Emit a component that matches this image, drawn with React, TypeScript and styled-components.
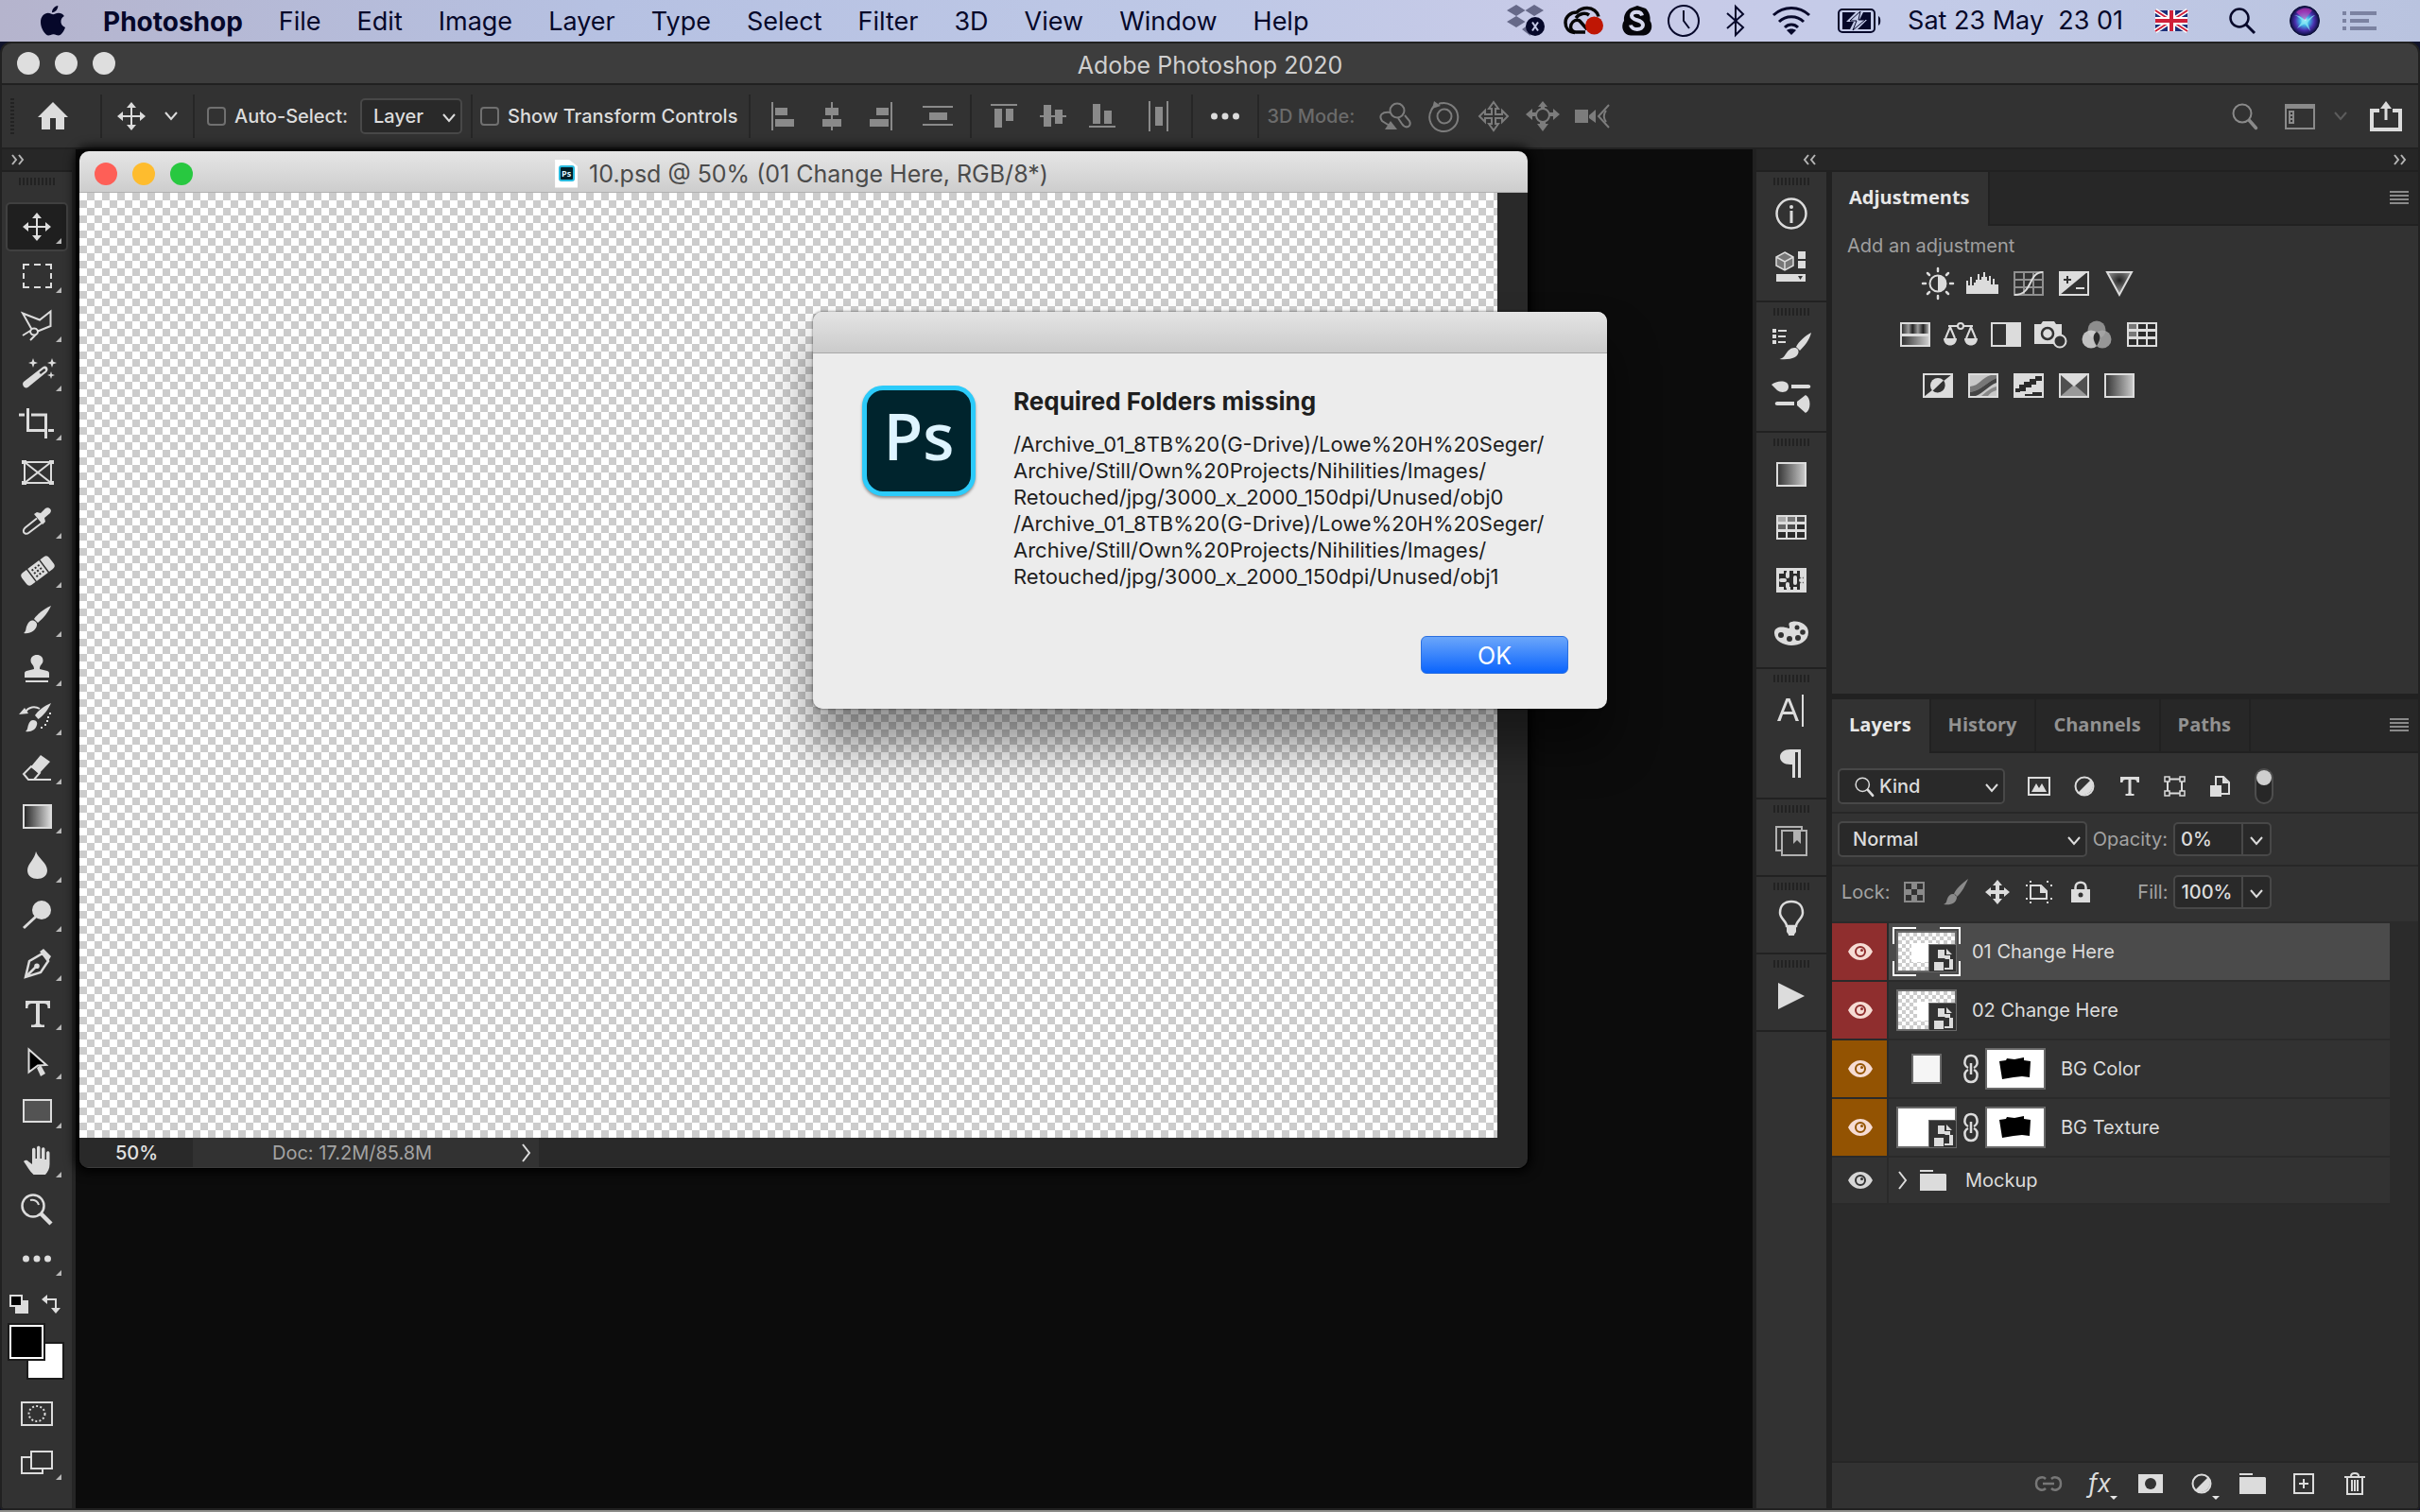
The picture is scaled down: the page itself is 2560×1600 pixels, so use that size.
import React from 'react';
import styled, { createGlobalStyle, css } from 'styled-components';

const ui = '"Inter", "Liberation Sans", sans-serif';
const tabFont = '"Open Sans", "Noto Sans", sans-serif';
const c = {
  edge: '#212121',
  panel: '#323232',
  well: '#272727',
  field: '#292929',
  outline: '#484848',
  text: '#dcdcdc',
  muted: '#a3a3a3',
  dim: '#8a8a8a',
};

const Global = createGlobalStyle`
  *, *::before, *::after { box-sizing: border-box; }
  body { margin: 0; background: #0c0c0c; font-family: ${ui}; -webkit-font-smoothing: antialiased; }
  button, input, select { font: inherit; color: inherit; }
`;

/* ---------- icons ---------- */

const Svg = styled.svg`
  display: block;
  flex: none;
  overflow: visible;
`;

type Art = [number, number, React.ReactNode];
const L = { fill: 'none', stroke: 'currentColor', strokeWidth: 2 } as const;
const moveArrow = 'M20 1l5 6h-4v8h8v-4l6 5-6 5v-4h-8v8h4l-5 6-5-6h4v-8h-8v4l-6-5 6-5v4h8V7h-4z';
const brushArt = (
  <>
    <path d="M35 1c-7 3-15 9-18 14l4 4c5-4 11-11 14-18z" />
    <path d="M15 16.500c3 0 5.500 2.500 5 5-1 6-7 9.500-14 8.500 3-2 2-5 3.500-8 1-3 3-5.500 5.500-5.500z" />
  </>
);

const art: Record<string, Art> = {
  /* tools */
  move: [40, 32, <path d={moveArrow} />],
  marquee: [40, 32, <path {...L} d="M6 9V4h6M17 4h7M29 4h6v5M35 13v6M35 23v5h-6M24 28h-7M12 28H6v-5M6 19v-6" />],
  lasso: [40, 32, <path {...L} d="M14 19.500L5 3.500l18 7L34.500 1.500V17L21 22.500M17 19.500a4 3.500 0 1 0 .1 0zM13 22l-8 5M19 26l-6 6" />],
  wand: [40, 32, <><path d="M6 24L26 8.500c2-1.500 4-1 5 .5s.6 3.500-1 5L11 29.500c-2 1.500-4 1-5-.5s-1.500-3.500 0-5z" /><path d="M22.500 14l4.500-3.500c1.500-1 3 .7 1.600 2L24 16z" fill="#323232" /><path d="M16-1l1.300 3.700L21 4l-3.700 1.300L16 9l-1.300-3.700L11 4l3.700-1.300zM36-1l1.300 3.700L41 4l-3.700 1.300L36 9l-1.300-3.700L31 4l3.700-1.300zM35 13l1 3 3 1-3 1-1 3-1-3-3-1 3-1z" /></>],
  crop: [40, 32, <path {...L} strokeWidth="3" d="M1 7h6M10.500 0v23.500H29M14 7h15.500v25M32 23.500h6" />],
  frame: [40, 32, <><path {...L} d="M7 5h28v22H7zM7 5l28 22M35 5L7 27" /><path d="M4 3h5v4H4zM33 3h5v4h-5zM4 25h5v4H4zM33 25h5v4h-5z" /></>],
  dropper: [40, 32, <><path {...L} d="M20 12.500L7.500 22.500c-2 2-2.500 5 0 6 1.500.6 3 0 4-.8L25 17.500" /><path d="M17 8l3-2 4 1 5-5c3-2 8 1 5 5l-6 5 1 4-3 3z" /></>],
  heal: [40, 32, <g transform="rotate(-37 21 16)"><path d="M3 12a4 4 0 0 1 4-4h5v16H7a4 4 0 0 1-4-4zM30 8h5a4 4 0 0 1 4 4v8a4 4 0 0 1-4 4h-5zM13.500 8h15v16h-15z" /><path d="M16 11h2v2h-2zM20 11h2v2h-2zM24 11h2v2h-2zM16 15h2v2h-2zM20 15h2v2h-2zM24 15h2v2h-2zM16 19h2v2h-2zM20 19h2v2h-2zM24 19h2v2h-2z" fill="#323232" /></g>],
  brush: [40, 32, brushArt],
  stamp: [40, 32, <path d="M20 1c4 0 6.500 2.500 6.500 6 0 4-3.500 4-3.500 9l8 2c1.500.5 2 1 2 3v4H7v-4c0-2 .5-2.500 2-3l8-2c0-5-3.500-5-3.500-9 0-3.500 2.500-6 6.500-6zM8 28h24v2H8z" />],
  history: [40, 32, <><path d="M35 0c-7 3-14 8-17 13l3.500 4C27 13 32 7 35 0zM16 18c3 0 5 2 4 5-1 5-6 8-12 7 2.500-2 2-4 3-7s2.500-5 5-5zM1 12l6-7 4 6z" /><path {...L} d="M8 9c3-5 10-6 15-3" /><path d="M31 14h2v2h-2zM30 18h2v2h-2zM28 22h2v2h-2zM24 25h2v2h-2zM33 10h2v2h-2z" /></>],
  eraser: [40, 32, <><path d="M14 15L24 3l10 7-12 13z" /><path {...L} d="M14 15l-8 8 5 6h6l6-7zM11 29h24" /></>],
  gradient: [40, 32, <><defs><linearGradient id="gTool"><stop offset="0" stopColor="#222" /><stop offset="1" stopColor="#ddd" /></linearGradient></defs><rect x="6" y="4" width="29" height="24" fill="url(#gTool)" stroke="currentColor" strokeWidth="2" /></>],
  blur: [40, 32, <path d="M19 1c2 7 12 12 12 20 0 6-5 9-10.500 9S10 27 10 21c0-7 8-12 9-20z" />],
  dodge: [40, 32, <><ellipse cx="25" cy="11" rx="10" ry="10" /><path stroke="currentColor" strokeWidth="3" d="M6 30l14-13" /></>],
  pen: [40, 32, <><path {...L} strokeWidth="2.500" d="M8 30l4-17 14-8 6 8-8 12zM8 30l11-11" /><path d="M23 3l4-3 8 8-3 5zM20 15.500a2.800 2.800 0 1 1 0 5.600 2.800 2.800 0 0 1 0-5.600z" /></>],
  type: [40, 32, <path d="M8 3h26v8h-2.500c0-4-1-5-5-5H23v20c0 2 1 2.500 5 2.500V31H14v-2.500c4 0 5-.5 5-2.500V6h-3.500c-4 0-5 1-5 5H8z" />],
  select: [40, 32, <><path d="M24 19l5 9-5 3-4-9z" /><path d="M11.500 2.500L30 19l-9 .5-9.500 7z" fill="#000" stroke="currentColor" strokeWidth="2" /></>],
  rect: [40, 32, <rect x="6" y="4" width="29" height="23" fill="#535353" stroke="currentColor" strokeWidth="2" />],
  hand: [40, 32, <path d="M16.500 31C12 27 9 21 6 17c2-2 4-1 5 0l4 3V4.500c0-2.500 3.500-2.500 3.500 0V14h1.500V2.500c0-2.500 3.500-2.500 3.500 0V14H25V4c0-2.500 3.500-2.500 3.500 0v11H30V8c0-2.500 3.500-2.500 3.500 0v12c0 5-2 8-4.500 11z" />],
  zoom: [40, 32, <><ellipse {...L} cx="16" cy="12" rx="11.500" ry="11.500" strokeWidth="2.500" /><path {...L} d="M13 6c4-1 8 1 9 5" /><path stroke="currentColor" strokeWidth="4.500" d="M24 20l11 11" /></>],
  dots: [40, 32, <path d="M8.500 12.500a3.500 3.500 0 1 1 0 7 3.500 3.500 0 0 1 0-7zM20 12.500a3.500 3.500 0 1 1 0 7 3.500 3.500 0 0 1 0-7zM31.500 12.500a3.500 3.500 0 1 1 0 7 3.500 3.500 0 0 1 0-7z" />],
  defaults: [20, 20, <><path d="M6 6h14v14H6z" /><rect x="1" y="1" width="12" height="11" fill="#000" stroke="currentColor" strokeWidth="2" /></>],
  swap: [20, 20, <><path {...L} d="M5 5h10v10" /><path d="M0 5l6-5v10zM10 14h10l-5 6z" /></>],
  quickMask: [34, 26, <><rect {...L} x="1" y="1" width="32" height="24" /><ellipse {...L} cx="17" cy="13" rx="8.500" ry="8" strokeDasharray="2 2.200" /></>],
  screens: [34, 26, <><path {...L} d="M11 7H1v17h22v-5" /><rect {...L} x="11" y="1" width="22" height="18" /></>],

  /* option bar */
  home: [32, 30, <path d="M16 0l16 16h-4v13H19V17h-6v12H4V16H0z" />],
  chevron: [14, 10, <path {...L} d="M1 1l6 7 6-7" />],
  alignL: [24, 30, <path d="M0 0h2v30H0zM4 6h13v8H4zM4 18h20v8H4z" />],
  alignC: [24, 30, <path d="M11 0h2v6h6v8h-6v4h9v8h-9v4h-2v-4H2v-8h9v-4H5V6h6z" />],
  alignR: [24, 30, <path d="M22 0h2v30h-2zM7 6h13v8H7zM0 18h20v8H0z" />],
  spreadV: [32, 22, <path d="M0 0h32v2H0zM7 7h19v8H7zM0 19h32v2H0z" />],
  alignT: [28, 26, <path d="M0 0h28v2H0zM4 5h8v20H4zM16 5h8v13h-8z" />],
  alignM: [28, 24, <path d="M0 11h4V0h8v11h4V5h8v6h4v2h-4v7h-8v-7h-4v10H4V13H0z" />],
  alignB: [28, 26, <path d="M0 23h28v2H0zM4 0h8v21H4zM16 7h8v14h-8z" />],
  spreadH: [22, 32, <path d="M0 0h2v32H0zM7 6h8v20H7zM19 0h2v32h-2z" />],
  orbit: [34, 30, <><circle {...L} cx="19" cy="9" r="7.500" /><path {...L} d="M11.500 11C3 10-1 14 3 20l8 5M20 17l4 6c4 6 11 3 8-3l-5-6" /><path d="M6 29l6-9 7 9z" /></>],
  roll: [34, 32, <><circle {...L} cx="17" cy="16" r="7.500" /><path {...L} d="M11 3A15 15 0 1 1 3 10M3 10c1-3 3-5 5-6" /><path d="M4 8l2-8 7 5z" /></>],
  pan3d: [34, 32, <path {...L} d="M17 1l5 7h-3v6h7v-4l6 6-6 6v-4h-7v6h3l-5 7-5-7h3v-6H8v4l-6-6 6-6v4h7V8h-3z" />],
  slide3d: [36, 32, <><circle {...L} cx="18" cy="15" r="7" /><path d="M18 0l5 6h-3v3h-4V6h-3zM18 32l6-8h-3v-3h-6v3h-3zM0 14l7-6v4h4v4H7v4zM36 14l-7-6v4h-4v4h4v4z" /></>],
  camera3d: [36, 26, <><path d="M0 6h14v14H0zM15 12l7-6v14l-7-5z" /><path {...L} d="M36 1L25 13l11 12M33 7c-3 4-3 8 0 12" /></>],
  search: [28, 28, <><circle {...L} cx="11" cy="11" r="9.500" /><path stroke="currentColor" strokeWidth="3.500" strokeLinecap="round" d="M18.500 18.500l7 8" /></>],
  workspace: [32, 27, <><path {...L} d="M1 1h30v25H1z" /><path d="M0 0h32v5H0z" /><path {...L} d="M5 8h4v12H5zM5 12h4M5 16h4" /></>],
  share: [34, 32, <><path d="M0 8h10v4H4v16h26V12h-6V8h10v24H0z" /><path d="M17 0l6 8h-4.500v12h-3V8H11z" /></>],

  /* menu bar */
  apple: [26, 32, <><path d="M18.300 0c.3 3.500-2.900 7.300-6.300 7.200C11.700 3.800 15 .2 18.300 0z" /><path d="M13.200 9.300c1.500 0 3-1.600 5.800-1.600 2.300 0 4.500 1.200 5.900 3.200-5.100 3-4.300 10 1.100 12.100-1 3.300-4.200 8.600-7.100 8.600-2 0-2.800-1.300-5.300-1.300s-3.400 1.300-5.300 1.300C4.900 31.600 0 24.200 0 17.600 0 11.200 4 7.800 7.800 7.800c2.400 0 4 1.500 5.400 1.500z" /></>],
  dropbox: [40, 34, <><g opacity=".5"><path d="M10 0l9.500 6-9.500 6-10-6zM29 0l10 6-10 6-9.500-6zM10 12l9.500 6-9.500 6-10-6zM16 26l7-5 2 12z" /></g><circle cx="30" cy="23" r="10" /><path d="M27 18.500l6 9M33 18.500l-6 9" stroke="#c6cae6" strokeWidth="2" /></>],
  cc: [42, 30, <g color="#050505"><path {...L} strokeWidth="3.500" d="M12 27.500C5 27 2 22 2 17 2 10 8 6 14 6 17 3 21 1.500 25 1.500c6 0 11 4 12 9" /><path {...L} strokeWidth="3.500" d="M23 27H13c-4 0-6.500-4-5-8s6-6 9-4l8 9M13 12c4-5 10-6 14-3" /><circle cx="32.500" cy="20" r="9.500" fill="#bf1604" /></g>],
  skype: [32, 32, <><path d="M8 3l8-3 9 3c4 4 5 9 4.500 13 4 6 1 15-7 15.500H9C1 31 -2 22 2 16 1.500 10 4 6 8 3z" fill="#05050a" /><path d="M21 10.500c-1-5-11-5-11 0 0 6 12 3.500 12 10 0 6-12 6-13 0" fill="none" stroke="#d4d7ec" strokeWidth="4" /></>],
  clock: [34, 34, <><circle {...L} cx="17" cy="17" r="16" /><path {...L} d="M17 6v11l6 8" /></>],
  bluetooth: [20, 32, <path {...L} d="M1 8l17 15-8 8V1l8 8L1 24" />],
  wifi: [42, 30, <><path {...L} strokeWidth="3" d="M2 9c11-10 27-10 38 0M8 16c7-7 19-7 26 0M14 22c4-4 10-4 14 0" /><path d="M16 25c3-2 7-2 10 0l-5 5z" /></>],
  battery: [46, 26, <><rect {...L} x="1" y="1" width="38" height="24" rx="4" /><path d="M43 8c3 1 3 9 0 10zM5 4h14L9 14h8l-4 8H5zM35 4v18H21l10-10h-8l4-8z" /><path {...L} d="M24 3L13 13h7l-4 10L29 12h-7z" strokeWidth="1" /></>],
  flag: [34, 22, <><path d="M0 0h34v22H0z" fill="#1c2f7a" /><path d="M0 0l34 22M34 0L0 22" stroke="#fff" strokeWidth="5" /><path d="M0 0l34 22M34 0L0 22" stroke="#d0203a" strokeWidth="2" /><path d="M17 0v22M0 11h34" stroke="#fff" strokeWidth="8" /><path d="M17 0v22M0 11h34" stroke="#d0203a" strokeWidth="4" /></>],
  spotlight: [28, 28, <><circle {...L} cx="11" cy="11" r="9.500" strokeWidth="2.500" /><path stroke="currentColor" strokeWidth="3" d="M18 18l9 9" /></>],
  siri: [32, 32, <><defs><radialGradient id="siri"><stop offset="0" stopColor="#e8ffff" /><stop offset=".3" stopColor="#3fb8e8" /><stop offset=".65" stopColor="#4a2fae" /><stop offset="1" stopColor="#0a0f3c" /></radialGradient></defs><circle cx="16" cy="16" r="15.500" fill="url(#siri)" stroke="#0b0f35" /><path d="M5 10c6 0 9 4 12 6 4-2 7-6 10-6-4 3-6 6-8 8l3 9-6-8-8 5 6-8c-3-2-5-5-9-6z" fill="#7fe6f2" opacity=".8" /><path d="M7 7c5-5 12-6 17-2l-8 10z" fill="#d13bb8" opacity=".6" /></>],
  list: [36, 20, <path d="M0 0h4v4H0zM8 0h28v4H8zM0 8h4v4H0zM8 8h20v4H8zM0 16h4v4H0zM8 16h28v4H8z" opacity=".35" />],

  /* dock strip */
  info: [34, 34, <><circle {...L} cx="17" cy="17" r="15.500" strokeWidth="2.500" /><circle cx="17" cy="10" r="2" /><path d="M15.500 14h3v13h-3z" /></>],
  props: [32, 32, <><path d="M9 1l9 5v9l-9 5-9-5V6z" fill="#777" /><path {...L} strokeWidth="1.500" d="M9 1l9 5v9l-9 5-9-5V6zM0 6l9 5 9-5M9 11v9" /><path d="M23 0h8v8h-8zM23 10h8v8h-8zM0 24h31v8H0z" /><path d="M23 26h5l-2.500 4z" fill="#323232" /></>],
  brushes: [42, 34, <><path d="M1 1h4v4H1zM7 2h9v2H7zM1 7h4v4H1zM7 8h8v2H7zM1 13h4v4H1zM7 14h8v2H7z" /><path d="M42 5c-6 3-13 9-16 15l4 4c5-5 10-11 12-19zM24 21c3 0 5 2 4.500 5-1 5-7 8-20 7 4-1 5-3 7-6 2-3 5-6 8.500-6z" /></>],
  brushSet: [42, 34, <><path d="M0 4c6-5 18-5 18 2s-8 7-12 4c-2-2-4-4-6-6zM21 4h18c3 0 3 4 0 4H21zM6 22h18v4H6c-3 0-3-4 0-4zM27 22l9-7c6 3 6 16 0 19l-9-8z" /></>],
  gradients: [32, 26, <><defs><linearGradient id="gDock"><stop offset="0" stopColor="#333" /><stop offset="1" stopColor="#ccc" /></linearGradient></defs><rect x="1" y="1" width="30" height="24" fill="url(#gDock)" stroke="currentColor" strokeWidth="2" /></>],
  swatches: [32, 26, <><path d="M0 0h32v26H0z" /><path d="M2 2h8v5H2z" fill="#aaa" /><path d="M12 2h8v5h-8z" fill="#777" /><path d="M22 2h8v5h-8zM12 10h8v5h-8z" fill="#4a4a4a" /><path d="M2 10h8v5H2z" fill="#666" /><path d="M22 10h8v5h-8zM2 18h8v6H2zM12 18h8v6h-8zM22 18h8v6h-8z" fill="#2b2b2b" /></>],
  patterns: [32, 26, <><path d="M0 0h32v26H0z" /><path d="M3 6h26v14H3z" fill="#2b2b2b" /><path d="M8 3h3v3H8zM14 3h4v3h-4zM22 3h3v3h-3zM8 20h3v3H8zM15 20h3v3h-3zM22 20h3v3h-3z" fill="#2b2b2b" /><rect x="3" y="11" width="8" height="4" rx="2" /><rect x="10" y="4" width="4" height="7" rx="2" /><rect x="10" y="15" width="4" height="7" rx="2" /><rect x="18" y="8" width="4" height="10" rx="2" /><rect x="25" y="4" width="4" height="7" rx="2" /><rect x="24" y="11" width="6" height="4" rx="2" /><rect x="25" y="15" width="4" height="7" rx="2" /></>],
  palette: [36, 26, <><path d="M0 13C0 5 10 6 15 8c3 0-1-4 1-6 6-4 20 0 20 10 0 10-10 14-18 14S0 21 0 13z" /><g fill="#323232"><circle cx="7" cy="15" r="3" /><circle cx="16" cy="19" r="3" /><circle cx="25" cy="18" r="3" /><circle cx="30" cy="12" r="2.800" /><circle cx="24" cy="7" r="2.500" /></g></>],
  character: [30, 34, <path d="M0 28L9.500 4h4L23 28h-3.500L17 21H6l-2.500 7zM7 18h9L11.500 7zM26 0h2v34h-2z" />],
  paragraph: [24, 30, <path d="M22 0v30h-3V3h-3v27h-3V16h-2C4 16 0 12.500 0 8s4-8 11-8z" />],
  libraries: [34, 32, <g opacity=".75"><path {...L} d="M28 5V1H1v25h5" /><path {...L} d="M7 5h26v26H7z" /><path d="M19 5h8v14l-4-4-4 4z" /></g>],
  bulb: [26, 38, <><path {...L} strokeWidth="2.500" d="M8 27c0-5-7-8-7-14C1 5 6 1 13 1s12 4 12 12c0 6-7 9-7 14z" /><path d="M8 26h10v7c-1 2-2 2-2 4h-6c0-2-1-2-2-4z" /></>],
  play: [28, 28, <path d="M0 0l28 14L0 28z" />],

  /* adjustments */
  brightness: [34, 34, <><circle {...L} cx="17" cy="17" r="8.500" /><path d="M17 8a9 9 0 0 1 0 18z" /><path {...L} strokeWidth="2.500" strokeLinecap="round" d="M17 1v3M17 30v3M1 17h3M30 17h3M6 6l2 2M26 26l2 2M28 6l-2 2M8 26l-2 2" /></>],
  levels: [36, 26, <path d="M0 24V10h2v5h2V6h2v9h2v-3h2V9h2V3h2v6h2V6h2V1h2v5h2v4h2V5h2v9h2V8h2v6h4v10z" />],
  curves: [32, 26, <><path {...L} opacity=".55" d="M1 1h30v24H1zM11 1v24M21 1v24M1 9h30M1 17h30" /><path {...L} d="M1 25c20 0 14-24 30-24" /></>],
  exposure: [32, 26, <><path {...L} d="M1 1h30v24H1z" /><path d="M1 1h29L1 25z" /><path d="M9 5v8M5 9h8" stroke="#323232" strokeWidth="2" /><path {...L} d="M18 18h9" /></>],
  vibrance: [30, 28, <><defs><radialGradient id="vib" cy=".35"><stop offset="0" stopColor="#222" /><stop offset="1" stopColor="#888" /></radialGradient></defs><path d="M2 2h26L15 26z" fill="url(#vib)" stroke="currentColor" strokeWidth="2" /></>],
  hue: [32, 26, <><defs><linearGradient id="hue"><stop offset="0" stopColor="#333" /><stop offset=".25" stopColor="#999" /><stop offset=".4" stopColor="#222" /><stop offset=".6" stopColor="#999" /><stop offset=".8" stopColor="#222" /><stop offset="1" stopColor="#aaa" /></linearGradient></defs><path d="M0 0h32v26H0z" /><path d="M2 2h28v10H2z" fill="url(#hue)" /><path d="M2 15h28v9H2z" fill="url(#gDock)" /></>],
  balance: [36, 26, <><path {...L} d="M5 4h10M21 4h10M7 5L2 17M7 5l5 12M29 5l-5 12M29 5l5 12" /><circle {...L} cx="18" cy="4" r="3" /><path d="M0 17h14c0 10-14 10-14 0zM22 17h14c0 10-14 10-14 0z" /></>],
  bw: [32, 26, <><path {...L} d="M1 1h30v24H1z" /><path d="M16 0h16v26H16z" /></>],
  photo: [36, 28, <><path d="M0 3h7l2-3h12l2 3h6v21H0z" /><circle cx="14" cy="13" r="6" fill="none" stroke="#323232" strokeWidth="2.500" /><circle cx="27" cy="21" r="6.500" fill="#323232" stroke="currentColor" strokeWidth="2" /></>],
  mixer: [32, 30, <><circle cx="16" cy="10" r="9.500" fill="#8d8d8d" /><circle cx="10" cy="20" r="9.500" fill="#d0d0d0" opacity=".9" /><circle cx="22" cy="20" r="9.500" fill="#a8a8a8" opacity=".85" /><path d="M16 12c4 3 5 7 0 15-5-8-4-12 0-15z" fill="#2a2a2a" /></>],
  lookup: [32, 26, <><path d="M0 0h32v26H0z" /><path d="M2 2h8v5H2zM2 10h8v5H2z" fill="#777" /><path d="M12 2h8v5h-8zM22 2h8v5h-8zM12 10h8v5h-8zM22 10h8v5h-8zM2 18h8v6H2zM12 18h8v6h-8zM22 18h8v6h-8z" fill="#2b2b2b" /></>],
  invert: [32, 26, <><path {...L} d="M1 1h30v24H1z" /><path d="M31 1v24H1z" /><ellipse cx="16" cy="13" rx="8" ry="8" /><path d="M22 7.500a8 8 0 0 1-11.500 11z" fill="#323232" /></>],
  posterize: [32, 26, <><path d="M1 1h30v24H1z" fill="#c8c8c8" stroke="currentColor" strokeWidth="2" /><path d="M2 14C12 13 14 5 24 2h6v3C20 9 14 18 2 20z" fill="#777" /><path d="M2 20C14 18 20 9 30 5v5C22 13 16 21 8 24H2z" fill="#444" /><path d="M14 24c5-4 9-8 16-10v4c-4 1-7 3-9 6z" fill="#888" /></>],
  threshold: [32, 26, <><path d="M0 0h32v26H0z" /><path d="M2 16h4v-4h5V9h6V6h6V3h7v5h-6v4h-5v3h-6v4H7v1H2zM12 22h8v-2h10v4H12z" fill="#2b2b2b" /></>],
  selective: [32, 26, <><path d="M1 1h30v24H1z" fill="#505050" stroke="currentColor" strokeWidth="2" /><path d="M2 24h28L16 12z" fill="#999" /><path d="M1 1h30L16 14z" /></>],
  gmap: [32, 26, <rect x="1" y="1" width="30" height="24" fill="url(#gDock)" stroke="currentColor" strokeWidth="2" />],

  /* layers */
  fImage: [24, 20, <><path {...L} d="M1 1h22v18H1z" /><path d="M4 16l5-9 3 5 3-5 5 9z" /></>],
  half: [22, 22, <><circle {...L} cx="11" cy="11" r="9.500" /><path d="M18 4a10 10 0 0 1-14 14z" /></>],
  fType: [20, 20, <path d="M0 0h20v6h-2.500c0-2-1-3-3-3h-3v14c0 1 .5 1 3 1v2h-9v-2c2.500 0 3 0 3-1V3h-3c-2 0-3 1-3 3H0z" />],
  fShape: [24, 22, <><path {...L} d="M4 3.500h15v15H4z" /><path d="M1 1h5v5H1zM17 1h5v5h-5zM1 16h5v5H1zM17 16h5v5h-5z" fill="#323232" stroke="currentColor" strokeWidth="1.500" /></>],
  fSmart: [22, 24, <><path {...L} d="M6 11V2h8l6 6v12h-8" /><path d="M13 2v7h7zM0 11h12v12H0z" /></>],
  lPixels: [22, 22, <><path {...L} d="M1 1h20v20H1z" /><path d="M8 2h6v6H8zM2 8h6v6H2zM14 8h6v6h-6zM8 14h6v6H8z" /></>],
  lBrush: [28, 28, <><path d="M27 0c-7 5-13 11-15 16l3 3c5-4 9-12 12-19zM11 16c3 0 4 2 4 4-1 6-6 8-14 7 3-1 3-3 4-6s3-5 6-5z" /></>],
  lMove: [26, 26, <path d="M13 0l5 6h-3v5h5V8l6 5-6 5v-3h-5v5h3l-5 6-5-6h3v-5H6v3l-6-5 6-5v3h5V6H8z" />],
  lBoard: [28, 24, <><path {...L} d="M5 5h11l6 6v8H5z" /><path d="M15 5v8h8zM0 4h2v2H0zM4 0h2v2H4zM22 0h2v2h-2zM26 4h2v2h-2zM0 18h2v2H0zM4 22h2v2H4zM22 22h2v2h-2zM26 18h2v2h-2z" /></>],
  lLock: [20, 24, <><path {...L} strokeWidth="2.500" d="M4.500 10V7c0-7 11-7 11 0v3" /><path d="M0 9h20v14H0z" /><circle cx="10" cy="15" r="2.500" fill="#323232" /></>],
  eye: [26, 18, <><path d="M0 9c6-12 20-12 26 0-6 12-20 12-26 0z" /><circle cx="13" cy="9" r="5" fill="none" stroke="var(--bg)" strokeWidth="2" /><circle cx="14.500" cy="7.500" r="1.500" fill="var(--bg)" /></>],
  chain: [16, 30, <path {...L} strokeWidth="2.500" d="M5 14C-1 11 1 1 8 1s9 10 3 13M5 16C-1 19 1 29 8 29s9-10 3-13M8 9v12" />],
  smart: [28, 28, <><path d="M0 0h28v28H0z" fill="#323232" /><path d="M9 5h7v6h6v4h-5l-1-1H9zM18 4l6 6h-6zM5 18h10v9H5zM16 24h5v-9h4v11h-9z" fill="#dcdcdc" /></>],
  shapes: [36, 24, <path d="M1 4l7-1 1-2 8 1 10-2v3l7 1-1 17-8-1-9 1-12 2z" fill="#000" />],
  folder: [28, 22, <path d="M0 0h14v2H0zM0 4h27l1 1v17H0z" />],
  arrow: [10, 20, <path {...L} d="M1 1l7 9-7 9" />],
  link: [28, 16, <path {...L} strokeWidth="2.500" d="M11 3C8 0 1 1 1 8s7 8 10 5M17 3c3-3 10-2 10 5s-7 8-10 5M8 8h12" />],
  mask: [26, 20, <><path d="M0 0h26v20H0z" /><circle cx="13" cy="10" r="6" fill="#323232" /></>],
  plus: [22, 22, <path {...L} d="M1 1h20v20H1zM11 6v10M6 11h10" />],
  trash: [22, 24, <><path {...L} d="M0 5h22M7 4c0-4 8-4 8 0M3 5v18h16V5M8 8v12M11 8v12M14 8v12" /></>],
};

const Icon = ({ name }: { name: string }) => {
  const [w, h, body] = art[name];
  return (
    <Svg width={w} height={h} viewBox={`0 0 ${w} ${h}`} fill="currentColor" aria-hidden="true">
      {body}
    </Svg>
  );
};

/* ---------- shared pieces ---------- */

const Plain = css`
  display: flex;
  align-items: center;
  justify-content: center;
  padding: 0;
  border: 0;
  background: none;
`;

const Screen = styled.div`
  display: flex;
  flex-direction: column;
  position: relative;
  height: 100vh;
  overflow: hidden;
  background: #10132c;
  border-bottom: 2px solid #8e8e8b;
  color: ${c.text};
`;

const Dots = styled.div<{ $pad: number }>`
  display: flex;
  gap: 16px;
  position: absolute;
  left: ${p => p.$pad}px;
`;
const Dot = styled.button<{ $color: string }>`
  width: 24px;
  height: 24px;
  padding: 0;
  border: 0;
  border-radius: 50%;
  background: ${p => p.$color};
`;

const Grip = styled.div`
  height: 8px;
  width: 38px;
  margin: 6px auto 0;
  flex: none;
  background: repeating-linear-gradient(90deg, #222 0 2px, #323232 2px 4px);
`;

/* ---------- menu bar ---------- */

const MenuBar = styled.header`
  display: flex;
  align-items: center;
  height: 44px;
  flex: none;
  padding: 0 46px 0 43px;
  background: linear-gradient(90deg, #b5b4cd 0%, #b6c1e2 25%, #bec8e6 50%, #c9cbe8 66%, #c3cbe8 80%, #b9c3df 100%);
  color: #06082a;
  font-size: 27px;
  line-height: 44px;
`;
const Menus = styled.nav`
  display: flex;
  gap: 38px;
  flex: 1;
  margin-left: 40px;
  padding-top: 2px;
`;
const MenuItem = styled.button<{ $app?: boolean }>`
  ${Plain}
  font-size: ${p => (p.$app ? 28 : 27)}px;
  font-weight: ${p => (p.$app ? 700 : 400)};
`;
const Status = styled.div`
  display: flex;
  align-items: center;
`;
const StatusItem = styled.button<{ $gap: number }>`
  ${Plain}
  margin-left: ${p => p.$gap}px;
  white-space: pre;
`;

/* ---------- application window ---------- */

const AppWindow = styled.main`
  display: flex;
  flex-direction: column;
  flex: 1;
  min-height: 0;
  border: 2px solid ${c.edge};
  border-radius: 12px 12px 4px 4px;
  background: ${c.edge};
  overflow: hidden;
`;
const TitleBar = styled.div`
  display: flex;
  position: relative;
  align-items: center;
  justify-content: center;
  height: 42px;
  flex: none;
  background: #3d3d3d;
`;
const AppTitle = styled.h1`
  margin: 0;
  padding-top: 4px;
  font-size: 25px;
  line-height: 38px;
  font-weight: 400;
  color: #cfcfcf;
`;

const Options = styled.div`
  display: flex;
  align-items: center;
  height: 70px;
  flex: none;
  padding: 0 17px 0 9px;
  border: solid ${c.edge};
  border-width: 2px 0;
  background: ${c.panel};
  font-size: 20px;
  font-weight: 500;
`;
const SideGrip = styled.div`
  width: 4px;
  height: 38px;
  background: repeating-linear-gradient(0deg, #222 0 2px, #323232 2px 4px);
`;
const Divider = styled.div<{ $before?: number; $after?: number }>`
  width: 2px;
  height: 46px;
  background: #262626;
  margin-left: ${p => p.$before ?? 0}px;
  margin-right: ${p => p.$after ?? 0}px;
`;
const OptButton = styled.button<{ $gap?: number; $w?: number; $tone?: string }>`
  ${Plain}
  height: 46px;
  margin-left: ${p => p.$gap ?? 0}px;
  width: ${p => (p.$w ? `${p.$w}px` : 'auto')};
  color: ${p => p.$tone ?? c.text};
`;
const Check = styled.label`
  display: flex;
  align-items: center;
  gap: 9px;
  line-height: 28px;
  white-space: nowrap;
`;
const Tick = styled.input`
  appearance: none;
  width: 20px;
  height: 20px;
  margin: 0;
  border: 2px solid #707070;
  border-radius: 4px;
`;
const ModeLabel = styled.span`
  width: 110px;
  color: #6b6b6b;
`;
const Fill = styled.div`
  flex: 1;
`;

const Field = styled.div<{ $w: number; $gap?: number }>`
  position: relative;
  width: ${p => p.$w}px;
  margin-left: ${p => p.$gap ?? 0}px;
  color: ${c.text};
`;
const Select = styled.select<{ $pad: number }>`
  appearance: none;
  display: block;
  width: 100%;
  height: 38px;
  padding: 0 0 0 ${p => p.$pad}px;
  border: 2px solid ${c.outline};
  border-radius: 5px;
  background: ${c.field};
  font-size: 20px;
  font-weight: 500;
`;
const Caret = styled.span<{ $right: number }>`
  position: absolute;
  right: ${p => p.$right}px;
  top: 16px;
  pointer-events: none;
`;
const Lens = styled.span`
  position: absolute;
  left: 18px;
  top: 9px;
  pointer-events: none;
  svg { width: 21px; height: 21px; }
`;

const Drop = ({ w, gap, pad, caret, label, value, lens }: { w: number; gap?: number; pad: number; caret: number; label: string; value: string; lens?: boolean }) => (
  <Field $w={w} $gap={gap}>
    <Select $pad={pad} aria-label={label} defaultValue={value}>
      <option>{value}</option>
    </Select>
    {lens && <Lens><Icon name="search" /></Lens>}
    <Caret $right={caret}><Icon name="chevron" /></Caret>
  </Field>
);

/* ---------- body ---------- */

const Body = styled.div`
  display: flex;
  flex: 1;
  min-height: 0;
`;
const Tools = styled.aside`
  display: flex;
  flex-direction: column;
  align-items: center;
  width: 78px;
  flex: none;
  border-right: 4px solid #262626;
  background: ${c.panel};
`;
const Collapse = styled.button`
  ${Plain}
  width: 100%;
  height: 24px;
  flex: none;
  justify-content: flex-start;
  padding-left: 10px;
  border-bottom: 2px solid ${c.edge};
  background: #272727;
  color: #b4b4b4;
`;
const ToolList = styled.div`
  display: flex;
  flex-direction: column;
  margin-top: 18px;
`;
const Tool = styled.button<{ $on?: boolean; $more?: boolean }>`
  ${Plain}
  position: relative;
  width: 66px;
  height: 52px;
  border-radius: 5px;
  ${p => p.$on && css`
    background: #1f1f1f;
    border: 2px solid #404040;
  `}
  ${p => p.$more && css`
    &::after {
      content: '';
      position: absolute;
      right: ${p.$on ? 5 : 7}px;
      bottom: ${p.$on ? 6 : 8}px;
      border: 3px solid #b8b8b8;
      border-top-color: transparent;
      border-left-color: transparent;
    }
  `}
`;
const ColorRow = styled.div`
  display: flex;
  align-items: center;
  justify-content: space-between;
  width: 54px;
  height: 42px;
  margin-right: 4px;
  padding-top: 2px;
`;
const Swatches = styled.div`
  position: relative;
  width: 62px;
  height: 70px;
`;
const Swatch = styled.button<{ $back?: boolean }>`
  position: absolute;
  left: ${p => (p.$back ? 20 : 0)}px;
  top: ${p => (p.$back ? 20 : 0)}px;
  width: 40px;
  height: 40px;
  padding: 0;
  border: 2px solid #1b1b1b;
  background: ${p => (p.$back ? '#fff' : '#000')};
  box-shadow: ${p => (p.$back ? 'none' : 'inset 0 0 0 2px #fff')};
`;

const Desk = styled.section`
  position: relative;
  flex: 1;
  min-width: 0;
  background: #0c0c0c;
`;
const Doc = styled.article`
  display: flex;
  flex-direction: column;
  position: absolute;
  left: 4px;
  top: 2px;
  right: 238px;
  bottom: 360px;
  border-radius: 10px;
  overflow: hidden;
  background: #292929;
  box-shadow: 0 0 0 1px #000, 0 0 12px 4px #000;
`;
const DocBar = styled.div`
  display: flex;
  position: relative;
  align-items: center;
  justify-content: center;
  gap: 12px;
  height: 44px;
  flex: none;
  padding: 4px 4px 0 0;
  border-bottom: 1px solid #b0b0b0;
  background: linear-gradient(#e6e6e6, #cdcdcd);
  color: #4b4b4b;
  font-size: 25px;
  line-height: 40px;
`;
const DocIcon = styled.span`
  display: grid;
  place-items: center;
  width: 24px;
  height: 30px;
  background: #fff;
  clip-path: polygon(0 0, 60% 0, 100% 25%, 100% 100%, 0 100%);
`;
const TinyPs = styled.span`
  display: grid;
  place-items: center;
  width: 17px;
  height: 17px;
  border: 2px solid #29b9dd;
  border-radius: 3px;
  background: #001e28;
  color: #dff4ff;
  font: 700 9px/12px ${tabFont};
`;
const Artboard = styled.div`
  flex: 1;
  margin-right: 32px;
  background: conic-gradient(#fff 25%, #ccc 0 50%, #fff 0 75%, #ccc 0) -8px 0 / 16px 16px;
`;
const DocFoot = styled.footer`
  display: flex;
  align-items: center;
  height: 32px;
  flex: none;
  font-size: 20px;
  border-bottom: 1px solid #3c3c3c;
`;
const ZoomBox = styled.input`
  width: 120px;
  height: 30px;
  padding: 0 0 0 38px;
  border: 0;
  background: #292929;
  color: #e2e2e2;
  font-weight: 500;
`;
const DocInfo = styled.button`
  ${Plain}
  justify-content: space-between;
  width: 366px;
  height: 31px;
  padding: 0 8px 0 84px;
  background: ${c.panel};
  color: ${c.muted};
`;
const Pale = styled.span`
  color: ${c.text};
`;

/* ---------- docks ---------- */

const Docks = styled.aside`
  display: flex;
  flex-direction: column;
  width: 704px;
  flex: none;
  border-left: 4px solid ${c.edge};
  background: ${c.edge};
`;
const DockHead = styled.div`
  display: flex;
  align-items: center;
  justify-content: space-between;
  height: 22px;
  margin-bottom: 2px;
  flex: none;
  padding: 0 12px 0 49px;
  background: #262626;
  color: #b4b4b4;
`;
const HeadButton = styled.button`
  ${Plain}
`;
const DockCols = styled.div`
  display: flex;
  gap: 6px;
  flex: 1;
  min-height: 0;
`;
const Strip = styled.div`
  display: flex;
  flex-direction: column;
  gap: 2px;
  width: 74px;
  flex: none;
`;
const StripGroup = styled.div<{ $rest?: boolean }>`
  display: flex;
  flex-direction: column;
  flex: ${p => (p.$rest ? 1 : 'none')};
  padding-bottom: 8px;
  background: ${c.panel};
`;
const StripGrip = styled(Grip)`
  margin-bottom: 2px;
`;
const StripButton = styled.button`
  ${Plain}
  height: 56px;
`;
const Panels = styled.div`
  display: flex;
  flex-direction: column;
  flex: 1;
  min-width: 0;
  gap: 6px;
`;
const Panel = styled.section<{ $h?: number }>`
  display: flex;
  flex-direction: column;
  flex: ${p => (p.$h ? `0 0 ${p.$h}px` : '1')};
  min-height: 0;
  background: ${c.panel};
`;
const Tabs = styled.div`
  display: flex;
  height: 57px;
  flex: none;
  background: linear-gradient(${c.edge}, ${c.edge}) bottom / 100% 2px no-repeat ${c.well};
`;
const Tab = styled.button<{ $on?: boolean }>`
  ${Plain}
  padding: 0 19px ${p => (p.$on ? 4 : 2)}px 18px;
  border-right: 2px solid ${c.edge};
  border-bottom: ${p => (p.$on ? 0 : 2)}px solid ${c.edge};
  background: ${p => (p.$on ? c.panel : 'none')};
  color: ${p => (p.$on ? '#e8e8e8' : '#929292')};
  font: 700 20px/28px ${tabFont};
`;
const PanelMenu = styled.button`
  width: 20px;
  height: 14px;
  margin: 20px 10px 0 auto;
  padding: 0;
  border: 0;
  background: repeating-linear-gradient(#8a8a8a 0 2px, transparent 2px 4px);
`;
const Hint = styled.p`
  margin: 8px 0 0 16px;
  font-size: 20px;
  line-height: 26px;
  color: #a0a0a0;
`;
const AdjGrid = styled.div`
  width: 416px;
`;
const AdjRow = styled.div`
  display: flex;
  justify-content: center;
  height: 54px;
`;
const AdjButton = styled.button`
  ${Plain}
  width: 48px;
`;

const Row = styled.div<{ $h: number; $top?: number; $line?: boolean; $pad?: number }>`
  display: flex;
  align-items: center;
  height: ${p => p.$h}px;
  flex: none;
  padding: ${p => p.$top ?? 0}px 0 0 ${p => p.$pad ?? 6}px;
  border-bottom: ${p => (p.$line ? 2 : 0)}px solid #272727;
  font-size: 20px;
  color: ${c.muted};
`;
const Filters = styled.div`
  display: flex;
  margin-left: 12px;
`;
const FilterButton = styled.button<{ $tone?: string; $w: number }>`
  ${Plain}
  width: ${p => p.$w}px;
  height: 38px;
  color: ${p => p.$tone ?? c.text};
`;
const Locks = styled.div`
  display: flex;
  margin-left: 4px;
`;
const Toggle = styled.label`
  display: block;
  width: 20px;
  height: 38px;
  margin-left: 12px;
  border: 2px solid #4e4e4e;
  border-radius: 10px;
  background: #272727;
`;
const ToggleInput = styled.input`
  appearance: none;
  display: block;
  width: 16px;
  height: 16px;
  margin: 0;
  border-radius: 50%;
  background: #cfcfcf;
`;
const FieldLabel = styled.label<{ $w: number }>`
  width: ${p => p.$w}px;
  padding-right: 6px;
  text-align: right;
`;
const Percent = styled.div`
  display: flex;
  width: 104px;
  height: 36px;
  border: 2px solid ${c.outline};
  border-radius: 5px;
  background: ${c.field};
  color: ${c.text};
`;
const PercentInput = styled.input`
  flex: 1;
  min-width: 0;
  padding: 0 0 0 6px;
  border: 0;
  background: none;
  font-weight: 500;
`;
const PercentDrop = styled.button`
  ${Plain}
  width: 30px;
  padding-top: 4px;
  border-left: 2px solid ${c.outline};
`;

const Layers = styled.ul`
  flex: 1;
  min-height: 0;
  margin: 4px 0 0;
  padding: 2px 30px 0 0;
  list-style: none;
  background: #2b2b2b;
`;
const Layer = styled.li<{ $on?: boolean; $h: number }>`
  display: flex;
  height: ${p => p.$h}px;
  border-bottom: 2px solid #2a2a2a;
  background: ${p => (p.$on ? '#4b4b4b' : c.panel)};
`;
const Eye = styled.button<{ $tag: string }>`
  ${Plain}
  --bg: ${p => p.$tag};
  width: 60px;
  flex: none;
  padding-left: 2px;
  border-right: 2px solid #2a2a2a;
  background: ${p => p.$tag};
  color: ${p => (p.$tag === c.panel ? '#d6d6d6' : '#f6dcd4')};
`;
const LayerBody = styled.div<{ $pad: number }>`
  display: flex;
  align-items: center;
  padding-left: ${p => p.$pad}px;
`;
const Thumb = styled.span<{ $checker?: boolean; $small?: boolean }>`
  display: block;
  position: relative;
  width: ${p => (p.$small ? 32 : 64)}px;
  height: ${p => (p.$small ? 32 : 44)}px;
  margin: 0 ${p => (p.$small ? 16 : 0)}px;
  border: 2px solid #686868;
  background: ${p => (p.$checker ? 'conic-gradient(#fff 25%, #ccc 0 50%, #fff 0 75%, #ccc 0) 0 0 / 8px 8px' : p.$small ? '#f5f5f5' : '#fff')};
`;
const White = styled.span<{ $left: number }>`
  position: absolute;
  left: ${p => p.$left}px;
  top: 11px;
  right: 18px;
  bottom: 9px;
  background: #fff;
`;
const Badge = styled.span`
  position: absolute;
  right: -2px;
  bottom: -2px;
  border: 1px solid #686868;
`;
const MaskThumb = styled(Thumb)`
  display: grid;
  place-items: center;
`;
const Bracket = styled.span`
  position: absolute;
  inset: -6px;
  background:
    linear-gradient(#fff, #fff) 0 0 / 25px 2px no-repeat,
    linear-gradient(#fff, #fff) 100% 0 / 22px 2px no-repeat,
    linear-gradient(#fff, #fff) 0 100% / 25px 2px no-repeat,
    linear-gradient(#fff, #fff) 100% 100% / 22px 2px no-repeat,
    linear-gradient(#fff, #fff) 0 0 / 2px 18px no-repeat,
    linear-gradient(#fff, #fff) 100% 0 / 2px 18px no-repeat,
    linear-gradient(#fff, #fff) 0 100% / 2px 16px no-repeat,
    linear-gradient(#fff, #fff) 100% 100% / 2px 16px no-repeat;
`;
const Chain = styled.span`
  margin: 0 7px;
`;
const LayerName = styled.span<{ $gap: number }>`
  margin-left: ${p => p.$gap}px;
  font-size: 20px;
  line-height: 28px;
  color: ${c.text};
`;
const FolderIcon = styled.span`
  margin-left: 13px;
`;
const LayerFoot = styled.footer`
  display: flex;
  justify-content: flex-end;
  height: 50px;
  flex: none;
  padding: 0 40px 4px 0;
  border-top: 2px solid #262626;
`;
const FootButton = styled.button<{ $dim?: boolean; $more?: boolean }>`
  ${Plain}
  position: relative;
  width: 54px;
  color: ${p => (p.$dim ? '#777' : c.text)};
  ${p => p.$more && css`
    &::after {
      content: '';
      position: absolute;
      right: 8px;
      bottom: 5px;
      border: 4px solid transparent;
      border-top-color: #e6e6e6;
      border-bottom: 0;
    }
  `}
`;
const Fx = styled.i`
  font-size: 26px;
  line-height: 30px;
`;

/* ---------- dialog ---------- */

const Dialog = styled.section`
  position: absolute;
  top: 330px;
  left: 50%;
  width: 840px;
  height: 420px;
  margin-left: -420px;
  display: flex;
  flex-direction: column;
  border-radius: 10px;
  background: #ececec;
  color: #1e1e1e;
  box-shadow: 0 0 2px 1px rgba(0, 0, 0, 0.3), 0 38px 50px 4px rgba(0, 0, 0, 0.42);
`;
const DialogBar = styled.div`
  height: 44px;
  flex: none;
  border-bottom: 1px solid #a9a9a9;
  border-radius: 10px 10px 0 0;
  background: linear-gradient(#e4e4e4, #cbcbcb);
`;
const DialogMain = styled.div`
  display: flex;
  align-items: flex-start;
  flex: 1;
  padding: 34px 40px 0 52px;
`;
const PsLogo = styled.div`
  display: grid;
  justify-items: center;
  width: 120px;
  height: 117px;
  flex: none;
  border: 5px solid #2ccbfa;
  border-radius: 22px;
  background: #00242d;
  box-shadow: 0 2px 3px rgba(0, 0, 0, 0.4);
  color: #def4ff;
  font: 600 68px/96px ${tabFont};
`;
const Message = styled.div`
  margin-left: 40px;
`;
const MessageTitle = styled.h2`
  margin: 0;
  font-size: 26px;
  line-height: 34px;
  font-weight: 700;
`;
const MessageText = styled.p`
  margin: 14px 0 0;
  font-size: 22px;
  line-height: 28px;
  white-space: nowrap;
`;
const DialogFoot = styled.div`
  display: flex;
  justify-content: flex-end;
  padding: 0 41px 37px;
`;
const OkButton = styled.button`
  width: 156px;
  height: 40px;
  padding: 2px 0 0;
  border: 1px solid #2a6fe0;
  border-radius: 6px;
  background: linear-gradient(#6ba6fa, #0a64fd);
  color: #fff;
  font-size: 25px;
  line-height: 36px;
`;

/* ---------- data ---------- */

const menus = ['File', 'Edit', 'Image', 'Layer', 'Type', 'Select', 'Filter', '3D', 'View', 'Window', 'Help'];
const tools = ['move', 'marquee', 'lasso', 'wand', 'crop', 'frame', 'dropper', 'heal', 'brush', 'stamp', 'history', 'eraser', 'gradient', 'blur', 'dodge', 'pen', 'type', 'select', 'rect', 'hand', 'zoom', 'dots'];
const single = ['frame', 'zoom'];
const strip = [['info', 'props'], ['brushes', 'brushSet'], ['gradients', 'swatches', 'patterns', 'palette'], ['character', 'paragraph'], ['libraries'], ['bulb'], ['play']];
const adjustments = [
  ['brightness', 'levels', 'curves', 'exposure', 'vibrance'],
  ['hue', 'balance', 'bw', 'photo', 'mixer', 'lookup'],
  ['invert', 'posterize', 'threshold', 'selective', 'gmap'],
];
const status: [string, number][] = [['dropbox', 0], ['cc', 20], ['skype', 20], ['clock', 16], ['bluetooth', 28], ['wifi', 28], ['battery', 28]];
const statusEnd: [string, number][] = [['flag', 34], ['spotlight', 44], ['siri', 36], ['list', 24]];
const red = '#8f2e2e';
const orange = '#935302';

const Twin = ({ back }: { back?: boolean }) => (
  <Svg width="14" height="12" viewBox="0 0 14 12" fill="none" stroke="currentColor" strokeWidth="2" aria-hidden="true">
    <path d={back ? 'M6 1L2 6l4 5M13 1L9 6l4 5' : 'M1 1l4 5-4 5M8 1l4 5-4 5'} />
  </Svg>
);

const PercentField = ({ id, value }: { id: string; value: string }) => (
  <Percent>
    <PercentInput id={id} defaultValue={value} />
    <PercentDrop aria-label={`${id} slider`}><Icon name="chevron" /></PercentDrop>
  </Percent>
);

export default function App() {
  return (
    <Screen>
      <Global />
      <MenuBar>
        <StatusItem $gap={0} aria-label="Apple menu"><Icon name="apple" /></StatusItem>
        <Menus>
          <MenuItem $app>Photoshop</MenuItem>
          {menus.map(m => <MenuItem key={m}>{m}</MenuItem>)}
        </Menus>
        <Status>
          {status.map(([n, g]) => <StatusItem key={n} $gap={g} aria-label={n}><Icon name={n} /></StatusItem>)}
          <StatusItem $gap={28}>{'Sat 23 May  23 01'}</StatusItem>
          {statusEnd.map(([n, g]) => <StatusItem key={n} $gap={g} aria-label={n}><Icon name={n} /></StatusItem>)}
        </Status>
      </MenuBar>

      <AppWindow>
        <TitleBar>
          <Dots $pad={16}>
            {['close', 'minimise', 'zoom'].map(n => <Dot key={n} $color="#dedede" aria-label={n} />)}
          </Dots>
          <AppTitle>Adobe Photoshop 2020</AppTitle>
        </TitleBar>

        <Options>
          <SideGrip />
          <OptButton $gap={25} aria-label="Home"><Icon name="home" /></OptButton>
          <Divider $before={34} />
          <OptButton $gap={11} aria-label="Move tool"><Icon name="move" /></OptButton>
          <OptButton $gap={15} aria-label="Tool presets"><Icon name="chevron" /></OptButton>
          <Divider $before={16} $after={13} />
          <Check><Tick type="checkbox" />Auto-Select:</Check>
          <Drop w={108} gap={13} pad={12} caret={7} label="Auto-select target" value="Layer" />
          <Divider $before={9} $after={8} />
          <Check><Tick type="checkbox" />Show Transform Controls</Check>
          <Divider $before={12} $after={8} />
          {['alignL', 'alignC', 'alignR'].map(n => <OptButton key={n} $w={52} $tone={c.dim} aria-label={n}><Icon name={n} /></OptButton>)}
          <OptButton $w={68} $tone={c.dim} aria-label="Distribute vertically"><Icon name="spreadV" /></OptButton>
          <Divider $after={8} />
          {['alignT', 'alignM', 'alignB'].map(n => <OptButton key={n} $w={52} $tone={c.dim} aria-label={n}><Icon name={n} /></OptButton>)}
          <OptButton $w={68} $tone={c.dim} aria-label="Distribute horizontally"><Icon name="spreadH" /></OptButton>
          <Divider />
          <OptButton $w={68} aria-label="More align options"><Icon name="dots" /></OptButton>
          <Divider $after={8} />
          <ModeLabel>3D Mode:</ModeLabel>
          {['orbit', 'roll', 'pan3d', 'slide3d', 'camera3d'].map(n => <OptButton key={n} $w={52} $tone="#7c7c7c" aria-label={n}><Icon name={n} /></OptButton>)}
          <Fill />
          <OptButton $tone={c.dim} aria-label="Search"><Icon name="search" /></OptButton>
          <OptButton $gap={28} $tone={c.dim} aria-label="Workspace"><Icon name="workspace" /></OptButton>
          <OptButton $gap={20} $tone="#5c5c5c" aria-label="Workspace menu"><Icon name="chevron" /></OptButton>
          <OptButton $gap={24} aria-label="Share"><Icon name="share" /></OptButton>
        </Options>

        <Body>
          <Tools>
            <Collapse aria-label="Expand toolbar"><Twin /></Collapse>
            <Grip />
            <ToolList>
              {tools.map(n => (
                <Tool key={n} $on={n === 'move'} $more={!single.includes(n)} aria-label={n}><Icon name={n} /></Tool>
              ))}
            </ToolList>
            <ColorRow>
              <Icon name="defaults" />
              <Icon name="swap" />
            </ColorRow>
            <Swatches>
              <Swatch $back aria-label="Background colour" />
              <Swatch aria-label="Foreground colour" />
            </Swatches>
            <Tool aria-label="Quick mask"><Icon name="quickMask" /></Tool>
            <Tool $more aria-label="Screen mode"><Icon name="screens" /></Tool>
          </Tools>

          <Desk>
            <Doc>
              <DocBar>
                <Dots $pad={16}>
                  {['#fe5f57', '#febc2e', '#28c840'].map(k => <Dot key={k} $color={k} aria-label="Window control" />)}
                </Dots>
                <DocIcon><TinyPs>Ps</TinyPs></DocIcon>
                10.psd @ 50% (01 Change Here, RGB/8*)
              </DocBar>
              <Artboard />
              <DocFoot>
                <ZoomBox aria-label="Zoom" defaultValue="50%" />
                <DocInfo>Doc: 17.2M/85.8M<Pale><Icon name="arrow" /></Pale></DocInfo>
              </DocFoot>
            </Doc>
          </Desk>

          <Docks>
            <DockHead>
              <HeadButton aria-label="Expand panels"><Twin back /></HeadButton>
              <HeadButton aria-label="Collapse panels"><Twin /></HeadButton>
            </DockHead>
            <DockCols>
              <Strip>
                {strip.map(g => (
                  <StripGroup key={g[0]}>
                    <StripGrip />
                    {g.map(n => <StripButton key={n} aria-label={n}><Icon name={n} /></StripButton>)}
                  </StripGroup>
                ))}
                <StripGroup $rest />
              </Strip>
              <Panels>
                <Panel $h={552}>
                  <Tabs>
                    <Tab $on>Adjustments</Tab>
                    <PanelMenu aria-label="Adjustments menu" />
                  </Tabs>
                  <Hint>Add an adjustment</Hint>
                  <AdjGrid>
                    {adjustments.map(r => (
                      <AdjRow key={r[0]}>
                        {r.map(n => <AdjButton key={n} aria-label={n}><Icon name={n} /></AdjButton>)}
                      </AdjRow>
                    ))}
                  </AdjGrid>
                </Panel>

                <Panel>
                  <Tabs>
                    <Tab $on>Layers</Tab>
                    <Tab>History</Tab>
                    <Tab>Channels</Tab>
                    <Tab>Paths</Tab>
                    <PanelMenu aria-label="Layers menu" />
                  </Tabs>
                  <Row $h={64} $top={8} $line>
                    <Drop w={177} pad={42} caret={7} label="Filter kind" value="Kind" lens />
                    <Filters>
                      {['fImage', 'half', 'fType', 'fShape', 'fSmart'].map(n => <FilterButton key={n} $w={48} aria-label={n}><Icon name={n} /></FilterButton>)}
                    </Filters>
                    <Toggle aria-label="Layer filtering"><ToggleInput type="checkbox" /></Toggle>
                  </Row>
                  <Row $h={56} $line>
                    <Drop w={264} pad={14} caret={7} label="Blend mode" value="Normal" />
                    <FieldLabel htmlFor="Opacity" $w={91}>Opacity:</FieldLabel>
                    <PercentField id="Opacity" value="0%" />
                  </Row>
                  <Row $h={54} $pad={10}>
                    Lock:
                    <Locks>
                      {['lPixels', 'lBrush', 'lMove', 'lBoard', 'lLock'].map((n, i) => (
                        <FilterButton key={n} $w={44} $tone={i < 2 ? c.dim : c.text} aria-label={n}><Icon name={n} /></FilterButton>
                      ))}
                    </Locks>
                    <FieldLabel htmlFor="Fill" $w={76}>Fill:</FieldLabel>
                    <PercentField id="Fill" value="100%" />
                  </Row>
                  <Layers>
                    <Layer $on $h={62}>
                      <Eye $tag={red} aria-label="Toggle visibility"><Icon name="eye" /></Eye>
                      <LayerBody $pad={8}>
                        <Thumb $checker><Bracket /><White $left={14} /><Badge><Icon name="smart" /></Badge></Thumb>
                        <LayerName $gap={16}>01 Change Here</LayerName>
                      </LayerBody>
                    </Layer>
                    <Layer $h={62}>
                      <Eye $tag={red} aria-label="Toggle visibility"><Icon name="eye" /></Eye>
                      <LayerBody $pad={8}>
                        <Thumb $checker><White $left={20} /><Badge><Icon name="smart" /></Badge></Thumb>
                        <LayerName $gap={16}>02 Change Here</LayerName>
                      </LayerBody>
                    </Layer>
                    <Layer $h={62}>
                      <Eye $tag={orange} aria-label="Toggle visibility"><Icon name="eye" /></Eye>
                      <LayerBody $pad={8}>
                        <Thumb $small />
                        <Chain><Icon name="chain" /></Chain>
                        <MaskThumb><Icon name="shapes" /></MaskThumb>
                        <LayerName $gap={16}>BG Color</LayerName>
                      </LayerBody>
                    </Layer>
                    <Layer $h={62}>
                      <Eye $tag={orange} aria-label="Toggle visibility"><Icon name="eye" /></Eye>
                      <LayerBody $pad={8}>
                        <Thumb><Badge><Icon name="smart" /></Badge></Thumb>
                        <Chain><Icon name="chain" /></Chain>
                        <MaskThumb><Icon name="shapes" /></MaskThumb>
                        <LayerName $gap={16}>BG Texture</LayerName>
                      </LayerBody>
                    </Layer>
                    <Layer $h={50}>
                      <Eye $tag={c.panel} aria-label="Toggle visibility"><Icon name="eye" /></Eye>
                      <LayerBody $pad={10}>
                        <Icon name="arrow" />
                        <FolderIcon><Icon name="folder" /></FolderIcon>
                        <LayerName $gap={20}>Mockup</LayerName>
                      </LayerBody>
                    </Layer>
                  </Layers>
                  <LayerFoot>
                    <FootButton $dim aria-label="Link layers"><Icon name="link" /></FootButton>
                    <FootButton $more aria-label="Layer style"><Fx>fx</Fx></FootButton>
                    <FootButton aria-label="Add mask"><Icon name="mask" /></FootButton>
                    <FootButton $more aria-label="New adjustment layer"><Icon name="half" /></FootButton>
                    <FootButton aria-label="New group"><Icon name="folder" /></FootButton>
                    <FootButton aria-label="New layer"><Icon name="plus" /></FootButton>
                    <FootButton aria-label="Delete layer"><Icon name="trash" /></FootButton>
                  </LayerFoot>
                </Panel>
              </Panels>
            </DockCols>
          </Docks>
        </Body>
      </AppWindow>

      <Dialog role="alertdialog" aria-labelledby="alert-title">
        <DialogBar />
        <DialogMain>
          <PsLogo>Ps</PsLogo>
          <Message>
            <MessageTitle id="alert-title">Required Folders missing</MessageTitle>
            <MessageText>
              /Archive_01_8TB%20(G-Drive)/Lowe%20H%20Seger/<br />
              Archive/Still/Own%20Projects/Nihilities/Images/<br />
              Retouched/jpg/3000_x_2000_150dpi/Unused/obj0<br />
              /Archive_01_8TB%20(G-Drive)/Lowe%20H%20Seger/<br />
              Archive/Still/Own%20Projects/Nihilities/Images/<br />
              Retouched/jpg/3000_x_2000_150dpi/Unused/obj1
            </MessageText>
          </Message>
        </DialogMain>
        <DialogFoot><OkButton>OK</OkButton></DialogFoot>
      </Dialog>
    </Screen>
  );
}
